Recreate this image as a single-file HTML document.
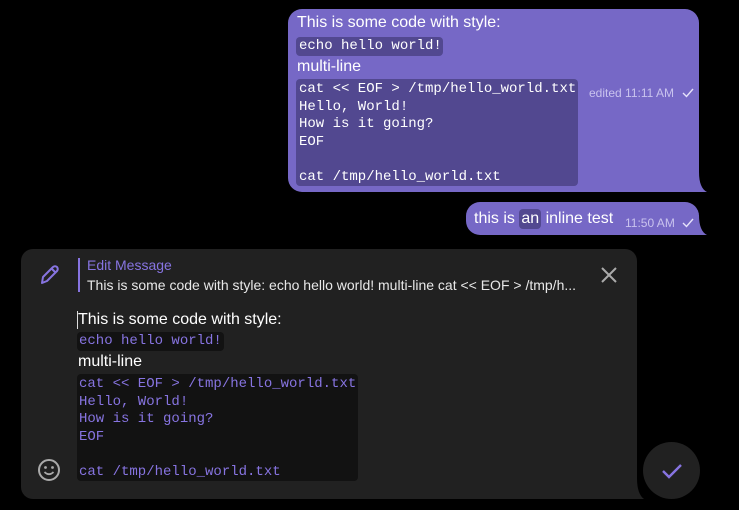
<!DOCTYPE html>
<html><head><style>
*{margin:0;padding:0;box-sizing:border-box}
body{width:739px;height:510px;background:#000;font-family:"Liberation Sans",sans-serif;position:relative;overflow:hidden;color:#fff}
.abs{position:absolute}
.mono{font-family:"Liberation Mono",monospace;font-size:14px}
.b{background:#7668c6}
.cd{background:#524890;border-radius:4px}
.t{font-size:16px;white-space:nowrap}
.ln{position:absolute;white-space:pre;line-height:17.6px}
</style></head><body>
<div class="abs b" style="left:288px;top:9px;width:411px;height:183px;border-radius:14px 14px 0 14px"></div>
<svg class="abs" style="left:690px;top:172px" width="18" height="20"><path d="M0 0 H9 V0 Q9 16 17 20 H0 Z" fill="#7668c6"/></svg>
<div class="abs t" style="left:297px;top:14px">This is some code with style:</div>
<div class="abs cd" style="left:296px;top:37px;width:147px;height:19px"></div>
<div class="abs mono ln" style="left:299px;top:38px">echo hello world!</div>
<div class="abs t" style="left:297px;top:58px">multi-line</div>
<div class="abs cd" style="left:296px;top:79px;width:282px;height:107px"></div>
<div class="abs mono ln" style="left:299px;top:81px">cat &lt;&lt; EOF &gt; /tmp/hello_world.txt
Hello, World!
How is it going?
EOF

cat /tmp/hello_world.txt</div>
<div class="abs" style="left:589px;top:86px;font-size:12px;color:#c9c3ee">edited 11:11 AM</div>
<svg class="abs" style="left:681px;top:87px" width="14" height="12"><path d="M2 6 L5.5 9.5 L12 2" stroke="#e6e2fa" stroke-width="1.4" fill="none"/></svg>
<div class="abs b" style="left:466px;top:202px;width:233px;height:33px;border-radius:14px 14px 0 14px"></div>
<svg class="abs" style="left:690px;top:215px" width="18" height="20"><path d="M0 0 H9 Q9 16 17 20 H0 Z" fill="#7668c6"/></svg>
<div class="abs t" style="left:474px;top:209px">this is <span style="display:inline-block;background:#524890;border-radius:4px;padding:0 2px;line-height:20px">an</span> inline test</div>
<div class="abs" style="left:625px;top:216px;font-size:12px;color:#c9c3ee">11:50 AM</div>
<svg class="abs" style="left:681px;top:217px" width="14" height="12"><path d="M2 6 L5.5 9.5 L12 2" stroke="#e6e2fa" stroke-width="1.4" fill="none"/></svg>
<div class="abs" style="left:21px;top:249px;width:616px;height:250px;background:#212121;border-radius:12px 12px 0 12px"></div>
<svg class="abs" style="left:628px;top:478px" width="18" height="21"><path d="M0 0 H9 Q9 16 16 21 H0 Z" fill="#212121"/></svg>
<svg class="abs" style="left:36px;top:262px" width="26" height="26"><path d="M6 21 L7 15 L17 5 Q19 3.5 21 5 Q22.5 7 21 9 L11 19 Z M15.5 6.5 L19.5 10.5" stroke="#8774e1" stroke-width="2" fill="none" stroke-linejoin="round"/></svg>
<div class="abs" style="left:78px;top:258px;width:2px;height:34px;background:#8774e1"></div>
<div class="abs" style="left:87px;top:257px;font-size:14px;color:#8774e1">Edit Message</div>
<div class="abs" style="left:87px;top:277px;font-size:14px;color:#e8e8e8;white-space:nowrap">This is some code with style: echo hello world! multi-line cat &lt;&lt; EOF &gt; /tmp/h...</div>
<svg class="abs" style="left:599px;top:265px" width="20" height="20"><path d="M3 3 L17 17 M17 3 L3 17" stroke="#aaa" stroke-width="2"/></svg>
<div class="abs" style="left:77px;top:311px;width:1px;height:18px;background:#ddd"></div>
<div class="abs t" style="left:78px;top:311px">This is some code with style:</div>
<div class="abs" style="left:77px;top:332px;width:147px;height:19px;background:#121212;border-radius:4px"></div>
<div class="abs mono ln" style="left:79px;top:333px;color:#8774e1">echo hello world!</div>
<div class="abs t" style="left:78px;top:353px">multi-line</div>
<div class="abs" style="left:77px;top:374px;width:281px;height:107px;background:#121212;border-radius:4px"></div>
<div class="abs mono ln" style="left:79px;top:376px;color:#8774e1">cat &lt;&lt; EOF &gt; /tmp/hello_world.txt
Hello, World!
How is it going?
EOF

cat /tmp/hello_world.txt</div>
<svg class="abs" style="left:37px;top:458px" width="24" height="24"><circle cx="12" cy="12" r="10" stroke="#aaa" stroke-width="2" fill="none"/><circle cx="8.5" cy="9.5" r="1.4" fill="#aaa"/><circle cx="15.5" cy="9.5" r="1.4" fill="#aaa"/><path d="M7.5 14 Q12 18.5 16.5 14" stroke="#aaa" stroke-width="1.8" fill="none"/></svg>
<div class="abs" style="left:643px;top:442px;width:57px;height:57px;border-radius:50%;background:#212121"></div>
<svg class="abs" style="left:659px;top:458px" width="26" height="26"><path d="M4 13 L10 19 L22 7" stroke="#8774e1" stroke-width="2.4" fill="none"/></svg>
</body></html>
